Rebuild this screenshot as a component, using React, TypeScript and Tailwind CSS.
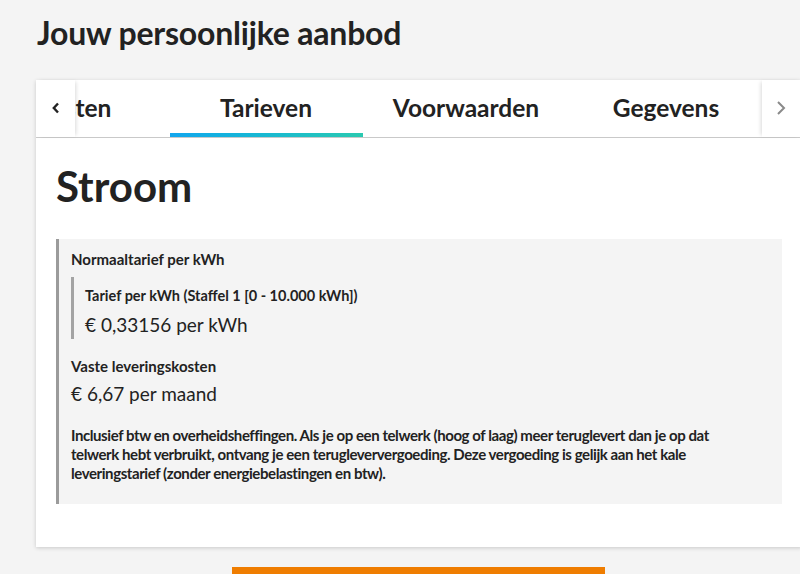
import React from "react";

const tabs = ["Kosten", "Tarieven", "Voorwaarden", "Gegevens"];

export default function App() {
  return (
    <div className="min-h-[574px] w-[800px] overflow-hidden bg-[#f4f4f4] text-[#222222]" style={{ fontFamily: "Lato, 'Noto Sans', sans-serif" }}>
      <h1 className="pl-[37px] pt-[15px] text-[32px] font-bold leading-[36px] tracking-[-0.2px]">Jouw persoonlijke aanbod</h1>
      <div className="mt-[29px] ml-[36px] w-[766px] bg-white shadow-[0_1px_4px_rgba(0,0,0,0.18)]">
        <div className="relative h-[58px] border-b border-[#c9c9c9]">
          <div className="h-full overflow-hidden">
            <div className="ml-[-70px] flex h-full">
              {tabs.map((t, i) => (
                <div key={t} className={`relative flex h-full w-[200px] shrink-0 items-center justify-center text-[24.5px] font-bold ${i === 0 ? "pl-[14px]" : ""}`}>
                  {t}
                  {t === "Tarieven" && (
                    <div className="absolute bottom-[-1px] left-[4px] right-[3px] h-[5px] bg-gradient-to-r from-[#12a6ee] to-[#2ac9b0]" />
                  )}
                </div>
              ))}
            </div>
          </div>
          <div className="absolute left-0 top-0 flex h-full w-[39px] items-center justify-center bg-white shadow-[3px_0_4px_-2px_rgba(0,0,0,0.15)]">
            <svg width="10" height="12" viewBox="0 0 10 12" className="mt-[-2px]">
              <polyline points="7,1.5 2.8,6 7,10.5" fill="none" stroke="#222" strokeWidth="2.4" />
            </svg>
          </div>
          <div className="absolute right-0 top-0 flex h-full w-[40px] items-center justify-center bg-white shadow-[-3px_0_4px_-2px_rgba(0,0,0,0.15)]">
            <svg width="12" height="16" viewBox="0 0 12 16" className="mt-[-2px] ml-[-2px]">
              <polyline points="3,2 9,8 3,14" fill="none" stroke="#8a8a8a" strokeWidth="2" />
            </svg>
          </div>
        </div>
        <div className="px-[20px] pb-[43px]">
          <h2 className="pt-[24px] text-[42px] font-bold leading-[48px]">Stroom</h2>
          <div className="mt-[29px] border-l-[3px] border-[#9b9b9b] bg-[#f4f4f4] pl-[12px] pr-[12px] pt-[10px] pb-[21px]">
            <div className="text-[15px] font-bold leading-[20px]">Normaaltarief per kWh</div>
            <div className="mt-[8px] border-l-[3px] border-[#a3a3a3] pl-[11px] pt-[9px] pb-[1px]">
              <div className="text-[14.5px] font-bold leading-[20px]">Tarief per kWh (Staffel 1 [0 - 10.000 kWh])</div>
              <div className="mt-[6px] text-[19px] leading-[26px]">€ 0,33156 per kWh</div>
            </div>
            <div className="mt-[17px] text-[15px] font-bold leading-[20px]">Vaste leveringskosten</div>
            <div className="mt-[5px] text-[19px] leading-[26px]">€ 6,67 per maand</div>
            <p className="mt-[19px] max-w-[665px] text-[15px] font-bold leading-[19px] tracking-[-0.42px]">
              Inclusief btw en overheidsheffingen. Als je op een telwerk (hoog of laag) meer teruglevert dan je op dat telwerk hebt verbruikt, ontvang je een terugleververgoeding. Deze vergoeding is gelijk aan het kale leveringstarief (zonder energiebelastingen en btw).
            </p>
          </div>
        </div>
      </div>
      <div className="mt-[20px] ml-[232px] h-[50px] w-[373px] bg-[#ef7d00]" />
    </div>
  );
}
